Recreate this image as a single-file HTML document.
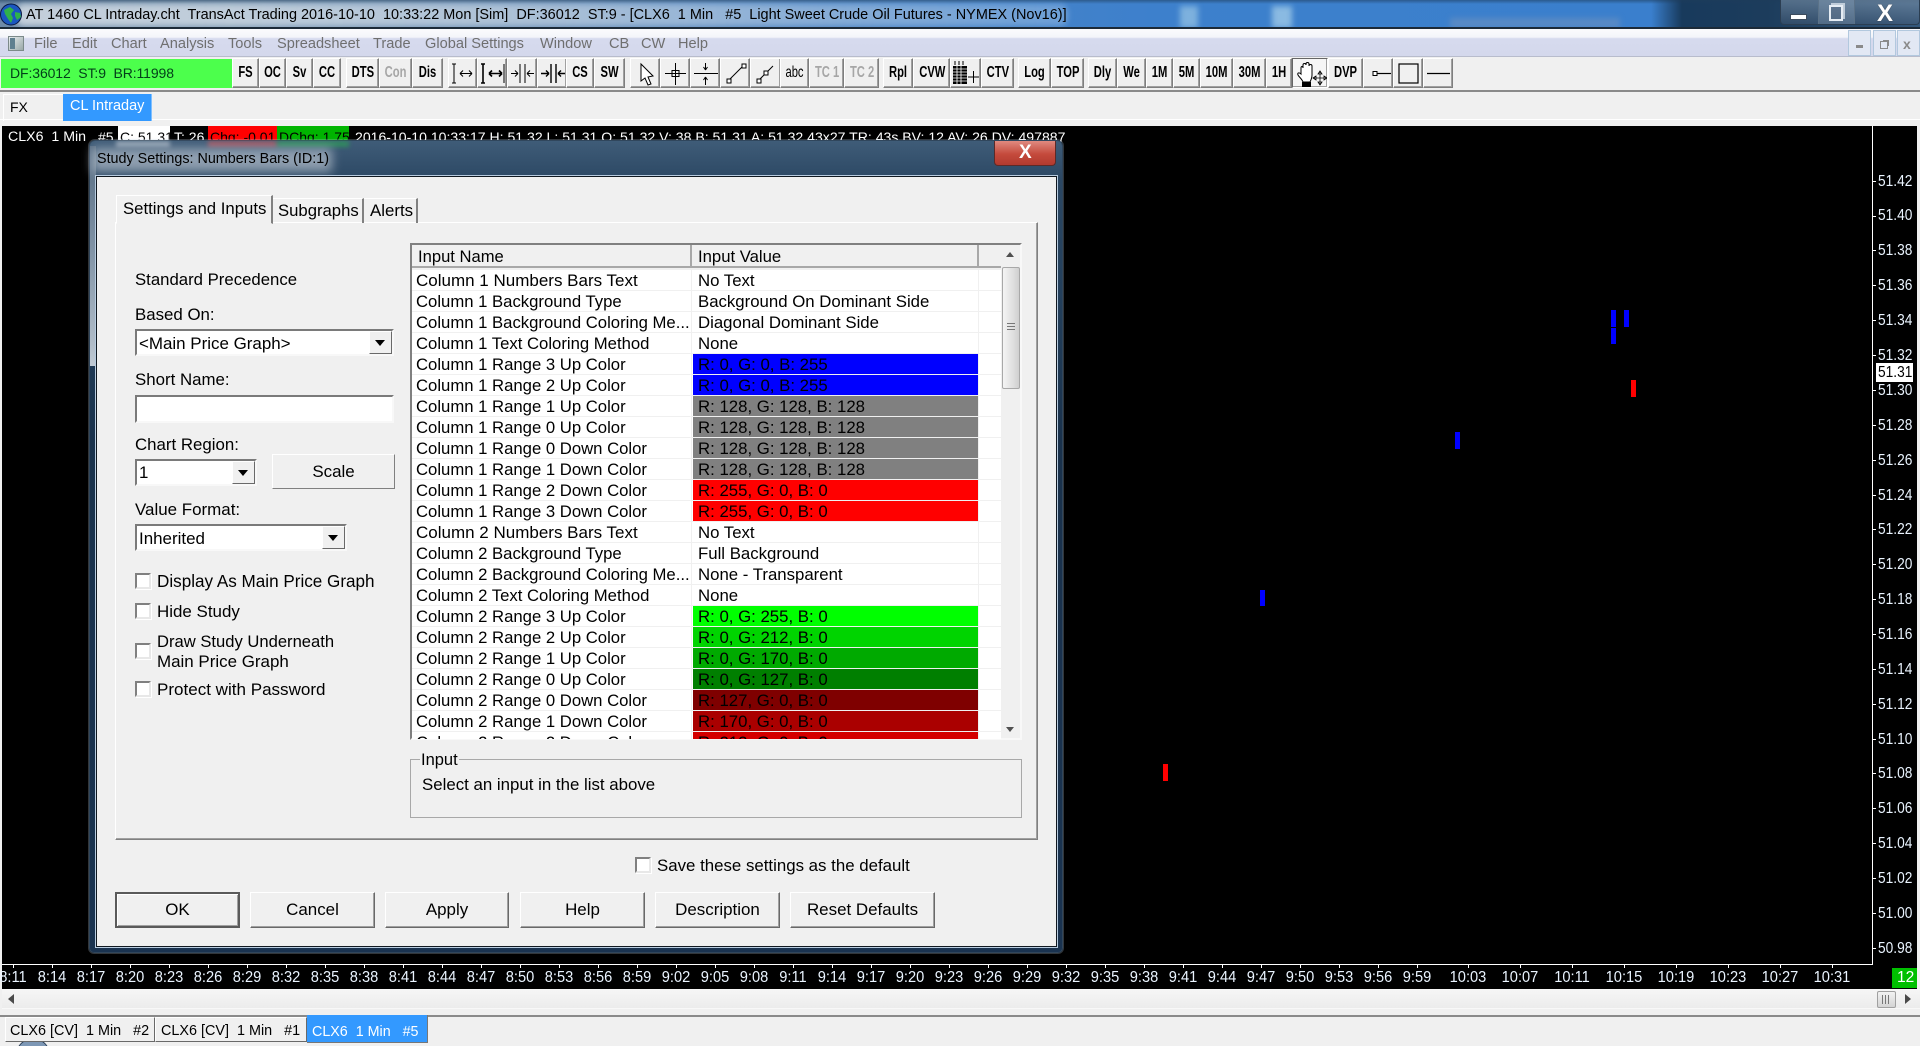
<!DOCTYPE html>
<html><head><meta charset="utf-8"><title>Study Settings</title>
<style>
html,body{margin:0;padding:0;width:1920px;height:1046px;overflow:hidden;background:#f0f0f0;font-family:"Liberation Sans",Arial,sans-serif;color:#000}
#root{position:relative;width:1920px;height:1046px;overflow:hidden;background:#f0f0f0}
div,span{box-sizing:border-box}
.a{position:absolute}
.t{position:absolute;white-space:pre;line-height:20px;font-size:16.85px}
.m{position:absolute;top:34px;white-space:pre;line-height:20px;font-size:14.6px;color:#6f6f6f}
.b{position:absolute;top:58px;height:30px;background:#f0f0f0;border:1px solid;border-color:#fff #7f7f7f #7f7f7f #fff;box-shadow:inset -1px -1px 0 #a0a0a0;text-align:center;font-weight:bold;font-size:16px;line-height:28px;overflow:hidden}
.b i{display:block;font-style:normal;transform:scaleX(.7);white-space:pre}
.b.d{color:#a6a6a6}
.b svg{position:absolute;left:0;top:0}
.p{position:absolute;left:1878px;white-space:pre;font-size:15.6px;line-height:18px;color:#eaf4ff;transform:scaleX(.88);transform-origin:0 0;margin-top:1px}
.tk{position:absolute;left:1873px;width:3px;height:1px;background:#fff}
.x{position:absolute;top:969px;width:60px;margin-left:-30px;text-align:center;font-size:15.6px;line-height:18px;color:#eaf4ff;white-space:pre;transform:scaleX(.94)}
.tx{position:absolute;top:965px;width:1px;height:3px;background:#fff}
.btn{position:absolute;top:892px;height:36px;background:#f0f0f0;border:1px solid;border-color:#fff #696969 #696969 #fff;box-shadow:inset -1px -1px 0 #a0a0a0;text-align:center;font-size:16.95px;line-height:33px}
.cb{position:absolute;width:16px;height:16px;background:#fff;border:2px solid;border-color:#808080 #e8e8e8 #e8e8e8 #808080;box-shadow:1px 1px 0 #fff}
.cbo{position:absolute;background:#fff;border:2px solid;border-color:#7a7a7a #f8f8f8 #f8f8f8 #7a7a7a}
.cbo b{position:absolute;right:0;top:0;bottom:0;width:21px;background:#f0f0f0;border:1px solid;border-color:#fff #696969 #696969 #fff}
.cbo b:after{content:"";position:absolute;left:5px;top:8px;border:5px solid transparent;border-top:6px solid #000;border-bottom:0}
.r{position:relative;height:21px;border-bottom:1px solid #f0f0f0;background:#fff}
.r span{position:absolute;top:0;line-height:22px;font-size:16.7px;white-space:pre}
.r .n{left:4px}
.r .n.w{font-size:17px}
.r .v{left:281px;width:286px;height:20px;padding-left:5px;border-right:1px solid #f0f0f0;font-size:16.8px}
.r:before{content:"";position:absolute;left:279px;top:0;width:1px;height:20px;background:#f0f0f0}
</style></head><body><div id="root">

<!-- title bar -->
<div class="a" style="left:0;top:0;width:1920px;height:28px;background:linear-gradient(90deg,#6d8aa8 0,#7e9ab4 12%,#6f93ba 28%,#4f86c4 42%,#3d80cc 60%,#3a7fcd 86%,#183a5c 87.6%,#1c3c5c 92%,#34587c 100%)"></div>
<div class="a" style="left:0;top:0;width:1920px;height:4px;background:linear-gradient(180deg,rgba(30,60,90,.55),rgba(30,60,90,0))"></div>
<div class="a" style="left:16px;top:4px;width:1052px;height:22px;background:linear-gradient(90deg,rgba(232,236,240,.7),rgba(215,225,235,.6) 45%,rgba(190,215,240,.35));border-radius:8px;filter:blur(3px)"></div>
<div class="a" style="left:1180px;top:6px;width:18px;height:22px;background:rgba(190,225,240,.5);filter:blur(3px)"></div>
<div class="a" style="left:1272px;top:6px;width:20px;height:22px;background:rgba(190,225,240,.6);filter:blur(3px)"></div>
<div class="a" style="left:1450px;top:18px;width:170px;height:10px;background:rgba(120,150,190,.5);filter:blur(3px)"></div>
<svg class="a" style="left:0;top:3px" width="23" height="23" viewBox="0 0 23 23"><circle cx="11" cy="11.5" r="10.5" fill="#1b57c0" stroke="#081840"/><path d="M4 7l6-3 4 3-3 4 2 4-2 5-3-4-3-5zM15 9l5 1 1 4-4 3-2-4z" fill="#2fb24a"/></svg>
<div class="t" style="left:26px;top:5px;font-size:14.46px">AT 1460 CL Intraday.cht  TransAct Trading 2016-10-10  10:33:22 Mon [Sim]  DF:36012  ST:9 - [CLX6  1 Min   #5  Light Sweet Crude Oil Futures - NYMEX (Nov16)]</div>
<!-- window buttons -->
<div class="a" style="left:1780px;top:0;width:140px;height:25px;background:linear-gradient(180deg,rgba(150,170,190,.45),rgba(70,90,115,.45));border:1px solid #2b3e52;border-top:0;border-radius:0 0 4px 4px"></div>
<div class="a" style="left:1818px;top:0;width:37px;height:24px;border-left:1px solid #5b7288;border-right:1px solid #5b7288;background:rgba(170,190,210,.25)"></div>
<div class="a" style="left:1790px;top:14px;width:17px;height:6px;background:#fff;border:1px solid #3c4b5c"></div>
<div class="a" style="left:1829px;top:5px;width:14px;height:16px;border:2px solid #e6edf4;background:rgba(80,100,125,.4);box-shadow:2px -2px 0 -0px rgba(230,237,244,.7)"></div>
<div class="t" style="left:1877px;top:3px;font-size:24px;font-weight:bold;color:#fff;line-height:22px;text-shadow:0 0 1px #333">X</div>
<div class="a" style="left:0;top:27px;width:1920px;height:2px;background:#1c2a38"></div>

<!-- menu -->
<div class="a" style="left:0;top:29px;width:1920px;height:28px;background:linear-gradient(180deg,#fbfbfd 0,#f4f5fa 30%,#d6daee 36%,#d4d8ec 100%);border-bottom:1px solid #b8bccc"></div>
<div class="a" style="left:8px;top:36px;width:16px;height:15px;background:linear-gradient(135deg,#e8eef0,#9aa8a8);border:1px solid #7c8a8a"></div>
<div class="a" style="left:10px;top:38px;width:5px;height:11px;background:#5f7f8f"></div>
<div class="m" style="left:34px">File</div><div class="m" style="left:72px">Edit</div><div class="m" style="left:111px">Chart</div><div class="m" style="left:160px">Analysis</div><div class="m" style="left:228px">Tools</div><div class="m" style="left:277px">Spreadsheet</div><div class="m" style="left:373px">Trade</div><div class="m" style="left:425px">Global Settings</div><div class="m" style="left:540px">Window</div><div class="m" style="left:609px">CB</div><div class="m" style="left:641px">CW</div><div class="m" style="left:678px">Help</div>
<div class="a" style="left:1848px;top:30px;width:23px;height:26px;background:#e2e8f4;border:1px solid #b2c8de"></div>
<div class="a" style="left:1873px;top:30px;width:23px;height:26px;background:#e2e8f4;border:1px solid #b2c8de"></div>
<div class="a" style="left:1897px;top:30px;width:23px;height:26px;background:#e2e8f4;border:1px solid #b2c8de"></div>
<div class="a" style="left:1856px;top:45px;width:7px;height:3px;background:#8a8a8a"></div>
<div class="a" style="left:1880px;top:41px;width:8px;height:8px;border:1px solid #8a8a8a;box-shadow:2px -2px 0 -1px #8a8a8a"></div>
<div class="t" style="left:1903px;top:34px;font-size:14px;font-weight:bold;color:#8a8a8a">x</div>

<!-- toolbar -->
<div class="a" style="left:1px;top:59px;width:232px;height:29px;background:#4cff4c"></div>
<div class="t" style="left:10px;top:63px;font-size:14px;letter-spacing:-.1px;color:#03401a">DF:36012  ST:9  BR:11998</div>
<div class="b" style="left:232px;width:27px"><i>FS</i></div>
<div class="b" style="left:259px;width:27px"><i>OC</i></div>
<div class="b" style="left:286px;width:27px"><i>Sv</i></div>
<div class="b" style="left:313px;width:28px"><i>CC</i></div>
<div class="b" style="left:346px;width:33px"><i>DTS</i></div>
<div class="b d" style="left:379px;width:33px"><i>Con</i></div>
<div class="b" style="left:412px;width:31px"><i>Dis</i></div>
<div class="b" style="left:448px;width:29px"><svg width="29" height="30"><path d="M5 5v19M3 5h4M3 24h4M11 14.5h12M11 14.5l3-3M11 14.5l3 3M23 14.5l-3-3M23 14.5l-3 3" stroke="#000" fill="none"/></svg></div>
<div class="b" style="left:477px;width:30px"><svg width="30" height="30"><path d="M5 5v19M3 5h4M3 24h4M11 14.5h13M11 14.5l3-3M11 14.5l3 3M24 14.5l-3-3M24 14.5l-3 3" stroke="#000" stroke-width="1.6" fill="none"/><path d="M26 5v19" stroke="#000"/></svg></div>
<div class="b" style="left:507px;width:30px"><svg width="30" height="30"><path d="M12 5v19M17 5v19M3 14.5h7M10 14.5l-3-3M10 14.5l-3 3M26 14.5h-7M19 14.5l3-3M19 14.5l3 3" stroke="#000" fill="none"/></svg></div>
<div class="b" style="left:537px;width:30px"><svg width="30" height="30"><path d="M13 5v19M18 5v19M3 14.5h8M11 14.5l-3-3M11 14.5l-3 3M27 14.5h-7M20 14.5l3-3M20 14.5l3 3" stroke="#000" stroke-width="1.4" fill="none"/></svg></div>
<div class="b" style="left:566px;width:28px"><i>CS</i></div>
<div class="b" style="left:594px;width:31px"><i>SW</i></div>
<div class="b" style="left:630px;width:30px"><svg width="30" height="30"><path d="M10 5v17l4-3 3 7 3-1-3-7 5-1z" stroke="#000" fill="#fff"/></svg></div>
<div class="b" style="left:660px;width:30px"><svg width="30" height="30"><path d="M4 14.5h21M14.5 4v22" stroke="#000" fill="none"/><rect x="11" y="11.5" width="7" height="6" fill="none" stroke="#000"/></svg></div>
<div class="b" style="left:690px;width:30px"><svg width="30" height="30"><path d="M3 14.5h24M14.5 4v7M14.5 18v8M14.5 11l-2-3M14.5 11l2-3M14.5 18l-2 3M14.5 18l2 3" stroke="#000" fill="none"/></svg></div>
<div class="b" style="left:720px;width:30px"><svg width="30" height="30"><path d="M8 21L22 7" stroke="#000"/><rect x="6" y="20" width="4" height="4" fill="#fff" stroke="#000"/><rect x="21" y="5" width="4" height="4" fill="#fff" stroke="#000"/></svg></div>
<div class="b" style="left:750px;width:31px"><svg width="31" height="30"><path d="M8 21l5-5M17 12l5-5" stroke="#000"/><rect x="6" y="20" width="4" height="4" fill="#fff" stroke="#000"/><rect x="13" y="12" width="4" height="4" fill="#fff" stroke="#000"/></svg></div>
<div class="b" style="left:780px;width:29px;font-weight:normal"><i>abc</i></div>
<div class="b d" style="left:809px;width:35px"><i>TC 1</i></div>
<div class="b d" style="left:844px;width:35px"><i>TC 2</i></div>
<div class="b" style="left:883px;width:30px"><i>Rpl</i></div>
<div class="b" style="left:913px;width:37px"><i>CVW</i></div>
<div class="b" style="left:950px;width:31px"><svg width="31" height="30"><rect x="2" y="7" width="14" height="18" fill="#000"/><path d="M2 10h14M2 13h14M2 16h14M2 19h14M2 22h14M6 7v18M10 7v18" stroke="#fff" stroke-width=".8"/><path d="M4 2v4M8 2v4M12 2v4" stroke="#000"/><path d="M17 18h11M22.5 12v12" stroke="#000"/></svg></div>
<div class="b" style="left:981px;width:33px"><i>CTV</i></div>
<div class="b" style="left:1018px;width:33px"><i>Log</i></div>
<div class="b" style="left:1051px;width:33px"><i>TOP</i></div>
<div class="b" style="left:1088px;width:29px"><i>Dly</i></div>
<div class="b" style="left:1117px;width:29px"><i>We</i></div>
<div class="b" style="left:1146px;width:27px"><i>1M</i></div>
<div class="b" style="left:1173px;width:27px"><i>5M</i></div>
<div class="b" style="left:1200px;width:33px"><i>10M</i></div>
<div class="b" style="left:1233px;width:33px"><i>30M</i></div>
<div class="b" style="left:1266px;width:26px"><i>1H</i></div>
<div class="b" style="left:1292px;width:36px;background:#f6f6f6;border-color:#666 #fff #fff #666"><svg width="36" height="30"><path d="M8 15V9c0-2 2-2 2 0V6c0-2 3-2 3 0v-1c0-2 3-2 3 0v2c0-2 3-2 3 0v9c0 3-1 5-2 7H10c-1-3-4-5-5-7-1-2 1-3 3-1z" fill="#fff" stroke="#000"/><rect x="9" y="23" width="9" height="5" fill="#000"/><path d="M27 12v14M20 19h14M27 12l-2 3h4zM27 26l-2-3h4zM20 19l3-2v4zM34 19l-3-2v4z" stroke="#000" fill="#fff" stroke-width=".8"/></svg></div>
<div class="b" style="left:1328px;width:35px"><i>DVP</i></div>
<div class="b" style="left:1363px;width:30px"><svg width="30" height="30"><path d="M12 14.5h15" stroke="#000" stroke-width="1.2"/><rect x="9" y="12.5" width="4" height="4" fill="#fff" stroke="#000"/></svg></div>
<div class="b" style="left:1393px;width:30px"><svg width="30" height="30"><rect x="5" y="5" width="19" height="19" fill="none" stroke="#000" stroke-width="1.2"/></svg></div>
<div class="b" style="left:1423px;width:30px"><svg width="30" height="30"><path d="M3 14.5h23" stroke="#000" stroke-width="1.2"/></svg></div>
<div class="a" style="left:0;top:90px;width:1920px;height:2px;background:#8a8a8a"></div>

<!-- tab strip -->
<div class="a" style="left:0;top:119px;width:1920px;height:1px;background:#fff"></div>
<div class="a" style="left:3px;top:94px;width:60px;height:27px;border-left:1px solid #fff;border-top:1px solid #fff"></div>
<div class="t" style="left:10px;top:97px;font-size:14px">FX</div>
<div class="a" style="left:63px;top:94px;width:89px;height:27px;background:#3399ff;border-right:1px solid #7fbfff"></div>
<div class="t" style="left:70px;top:96px;font-size:14.5px;color:#fff">CL Intraday</div>

<!-- chart -->
<div class="a" style="left:2px;top:126px;width:1915px;height:863px;background:#000"></div>
<div class="a" style="left:1872px;top:126px;width:1px;height:839px;background:#fff"></div>
<div class="a" style="left:2px;top:964px;width:1871px;height:1px;background:#fff"></div>
<div class="t" style="left:8px;top:127px;font-size:14.2px;color:#fff">CLX6  1 Min</div>
<div class="a" style="left:118px;top:126px;width:52px;height:18px;background:#fff"></div>
<div class="a" style="left:208px;top:126px;width:69px;height:18px;background:#f00"></div>
<div class="a" style="left:277px;top:126px;width:72px;height:18px;background:#00b400"></div>
<div class="t" style="left:98px;top:127px;font-size:14px;color:#fff">#5</div>
<div class="t" style="left:120px;top:127px;font-size:14px">C: 51.31</div>
<div class="t" style="left:174px;top:127px;font-size:14px;color:#fff">T: 26</div>
<div class="t" style="left:210px;top:127px;font-size:14px">Chg: -0.01</div>
<div class="t" style="left:279px;top:127px;font-size:14px">DChg: 1.75</div>
<div class="t" style="left:355px;top:127px;font-size:14.07px;color:#fff">2016-10-10 10:33:17 H: 51.32 L: 51.31 O: 51.32 V: 38 B: 51.31 A: 51.32 43x27 TR: 43s BV: 12 AV: 26 DV: 497887</div>

<!-- bars -->
<div class="a" style="left:1611px;top:310px;width:5px;height:17px;background:#00f"></div>
<div class="a" style="left:1611px;top:328px;width:5px;height:16px;background:#00f"></div>
<div class="a" style="left:1624px;top:310px;width:5px;height:17px;background:#00f"></div>
<div class="a" style="left:1631px;top:380px;width:5px;height:17px;background:#f00"></div>
<div class="a" style="left:1455px;top:432px;width:5px;height:17px;background:#00f"></div>
<div class="a" style="left:1260px;top:590px;width:5px;height:16px;background:#00f"></div>
<div class="a" style="left:1163px;top:764px;width:5px;height:17px;background:#f00"></div>

<!-- price axis -->
<div class="p" style="top:172px">51.42</div><div class="tk" style="top:181px"></div>
<div class="p" style="top:206px">51.40</div><div class="tk" style="top:216px"></div>
<div class="p" style="top:241px">51.38</div><div class="tk" style="top:250px"></div>
<div class="p" style="top:276px">51.36</div><div class="tk" style="top:285px"></div>
<div class="p" style="top:311px">51.34</div><div class="tk" style="top:320px"></div>
<div class="p" style="top:346px">51.32</div><div class="tk" style="top:355px"></div>
<div class="p" style="top:381px">51.30</div><div class="tk" style="top:390px"></div>
<div class="a" style="left:1876px;top:363px;width:37px;height:19px;background:#fff"></div>
<div class="p" style="top:363px;color:#000">51.31</div>
<div class="p" style="top:416px">51.28</div><div class="tk" style="top:425px"></div>
<div class="p" style="top:451px">51.26</div><div class="tk" style="top:460px"></div>
<div class="p" style="top:486px">51.24</div><div class="tk" style="top:495px"></div>
<div class="p" style="top:520px">51.22</div><div class="tk" style="top:529px"></div>
<div class="p" style="top:555px">51.20</div><div class="tk" style="top:564px"></div>
<div class="p" style="top:590px">51.18</div><div class="tk" style="top:599px"></div>
<div class="p" style="top:625px">51.16</div><div class="tk" style="top:634px"></div>
<div class="p" style="top:660px">51.14</div><div class="tk" style="top:669px"></div>
<div class="p" style="top:695px">51.12</div><div class="tk" style="top:704px"></div>
<div class="p" style="top:730px">51.10</div><div class="tk" style="top:739px"></div>
<div class="p" style="top:764px">51.08</div><div class="tk" style="top:773px"></div>
<div class="p" style="top:799px">51.06</div><div class="tk" style="top:808px"></div>
<div class="p" style="top:834px">51.04</div><div class="tk" style="top:843px"></div>
<div class="p" style="top:869px">51.02</div><div class="tk" style="top:878px"></div>
<div class="p" style="top:904px">51.00</div><div class="tk" style="top:913px"></div>
<div class="p" style="top:939px">50.98</div><div class="tk" style="top:948px"></div>

<!-- time axis -->
<div class="x" style="left:13px">8:11</div><div class="x" style="left:52px">8:14</div><div class="x" style="left:91px">8:17</div><div class="x" style="left:130px">8:20</div><div class="x" style="left:169px">8:23</div><div class="x" style="left:208px">8:26</div><div class="x" style="left:247px">8:29</div><div class="x" style="left:286px">8:32</div><div class="x" style="left:325px">8:35</div><div class="x" style="left:364px">8:38</div><div class="x" style="left:403px">8:41</div><div class="x" style="left:442px">8:44</div><div class="x" style="left:481px">8:47</div><div class="x" style="left:520px">8:50</div><div class="x" style="left:559px">8:53</div><div class="x" style="left:598px">8:56</div><div class="x" style="left:637px">8:59</div><div class="x" style="left:676px">9:02</div><div class="x" style="left:715px">9:05</div><div class="x" style="left:754px">9:08</div><div class="x" style="left:793px">9:11</div><div class="x" style="left:832px">9:14</div><div class="x" style="left:871px">9:17</div><div class="x" style="left:910px">9:20</div><div class="x" style="left:949px">9:23</div><div class="x" style="left:988px">9:26</div><div class="x" style="left:1027px">9:29</div><div class="x" style="left:1066px">9:32</div><div class="x" style="left:1105px">9:35</div><div class="x" style="left:1144px">9:38</div><div class="x" style="left:1183px">9:41</div><div class="x" style="left:1222px">9:44</div><div class="x" style="left:1261px">9:47</div><div class="x" style="left:1300px">9:50</div><div class="x" style="left:1339px">9:53</div><div class="x" style="left:1378px">9:56</div><div class="x" style="left:1417px">9:59</div><div class="x" style="left:1468px">10:03</div><div class="x" style="left:1520px">10:07</div><div class="x" style="left:1572px">10:11</div><div class="x" style="left:1624px">10:15</div><div class="x" style="left:1676px">10:19</div><div class="x" style="left:1728px">10:23</div><div class="x" style="left:1780px">10:27</div><div class="x" style="left:1832px">10:31</div>
<div class="tx" style="left:13px"></div><div class="tx" style="left:52px"></div><div class="tx" style="left:91px"></div><div class="tx" style="left:130px"></div><div class="tx" style="left:169px"></div><div class="tx" style="left:208px"></div><div class="tx" style="left:247px"></div><div class="tx" style="left:286px"></div><div class="tx" style="left:325px"></div><div class="tx" style="left:364px"></div><div class="tx" style="left:403px"></div><div class="tx" style="left:442px"></div><div class="tx" style="left:481px"></div><div class="tx" style="left:520px"></div><div class="tx" style="left:559px"></div><div class="tx" style="left:598px"></div><div class="tx" style="left:637px"></div><div class="tx" style="left:676px"></div><div class="tx" style="left:715px"></div><div class="tx" style="left:754px"></div><div class="tx" style="left:793px"></div><div class="tx" style="left:832px"></div><div class="tx" style="left:871px"></div><div class="tx" style="left:910px"></div><div class="tx" style="left:949px"></div><div class="tx" style="left:988px"></div><div class="tx" style="left:1027px"></div><div class="tx" style="left:1066px"></div><div class="tx" style="left:1105px"></div><div class="tx" style="left:1144px"></div><div class="tx" style="left:1183px"></div><div class="tx" style="left:1222px"></div><div class="tx" style="left:1261px"></div><div class="tx" style="left:1300px"></div><div class="tx" style="left:1339px"></div><div class="tx" style="left:1378px"></div><div class="tx" style="left:1417px"></div><div class="tx" style="left:1468px"></div><div class="tx" style="left:1520px"></div><div class="tx" style="left:1572px"></div><div class="tx" style="left:1624px"></div><div class="tx" style="left:1676px"></div><div class="tx" style="left:1728px"></div><div class="tx" style="left:1780px"></div><div class="tx" style="left:1832px"></div>
<div class="a" style="left:1892px;top:968px;width:25px;height:20px;background:#00c000"></div>
<div class="t" style="left:1897px;top:968px;font-size:15.6px;color:#fff">12</div>

<!-- hscroll -->
<div class="a" style="left:2px;top:989px;width:1918px;height:20px;background:linear-gradient(180deg,#f6f6f6,#ececec);border-bottom:1px solid #f8f8f8"></div>
<div class="a" style="left:8px;top:994px;border:5px solid transparent;border-right:6px solid #4a4a4a;border-left:0"></div>
<div class="a" style="left:1877px;top:991px;width:19px;height:17px;background:linear-gradient(180deg,#f2f2f2,#d4d4d4);border:1px solid #a0a0a0;border-radius:2px"></div>
<div class="a" style="left:1882px;top:995px;width:9px;height:9px;background:repeating-linear-gradient(90deg,#777 0 1px,transparent 1px 3px)"></div>
<div class="a" style="left:1905px;top:994px;border:5px solid transparent;border-left:6px solid #4a4a4a;border-right:0"></div>
<div class="a" style="left:0;top:1015px;width:1920px;height:2px;background:#8a8a8a"></div>

<!-- bottom tabs -->
<div class="a" style="left:16px;top:1038px;width:34px;height:34px;border-radius:50%;background:#7d97b5;border:1px solid #2c4058"></div>
<div class="a" style="left:5px;top:1017px;width:150px;height:25px;background:#f0f0f0;border:1px solid;border-color:#fff #696969 #696969 #fff"></div>
<div class="a" style="left:155px;top:1017px;width:152px;height:25px;background:#f0f0f0;border:1px solid;border-color:#fff #696969 #696969 #fff"></div>
<div class="a" style="left:307px;top:1015px;width:121px;height:28px;background:#3399ff;border-bottom:1px solid #777;border-right:1px solid #777"></div>
<div class="t" style="left:10px;top:1021px;font-size:14.4px">CLX6 [CV]  1 Min   #2</div>
<div class="t" style="left:161px;top:1021px;font-size:14.4px">CLX6 [CV]  1 Min   #1</div>
<div class="t" style="left:312px;top:1022px;font-size:14.3px;color:#fff">CLX6  1 Min   #5</div>

<!-- dialog frame -->
<div class="a" style="left:89px;top:140px;width:974px;height:813px;border-radius:6px 6px 5px 5px;background:linear-gradient(180deg,#3f5c78 0,#2b4763 40px,#24405c 150px,#1a324c 300px,#1a3350 100%);border:1px solid #30465c;box-shadow:0 0 0 1px rgba(200,215,230,.25)"></div>
<div class="a" style="left:90px;top:146px;width:6px;height:220px;background:linear-gradient(180deg,#566c82,#8496a8 50%,#b0bcc8 90%,#c0cad4)"></div>
<div class="a" style="left:116px;top:141px;width:54px;height:6px;background:rgba(225,230,235,.5);filter:blur(2px)"></div>
<div class="a" style="left:208px;top:141px;width:69px;height:6px;background:rgba(230,80,80,.55);filter:blur(2px)"></div>
<div class="a" style="left:277px;top:141px;width:72px;height:6px;background:rgba(40,170,80,.6);filter:blur(2px)"></div>
<div class="a" style="left:92px;top:148px;width:240px;height:24px;background:rgba(190,200,210,.65);filter:blur(5px)"></div>
<div class="t" style="left:97px;top:149px;font-size:14.35px">Study Settings: Numbers Bars (ID:1)</div>
<div class="a" style="left:994px;top:141px;width:62px;height:25px;background:linear-gradient(180deg,#e08a80,#c44a3c 55%,#b23a2f);border:1px solid #5c2a28;border-top:0;border-radius:0 0 4px 4px"></div>
<div class="t" style="left:1019px;top:143px;font-size:19px;font-weight:bold;color:#fff">X</div>
<div class="a" style="left:96px;top:176px;width:961px;height:771px;background:#f0f0f0;border:1px solid #101820;outline:1px solid #b8cce0"></div>

<!-- tab panel -->
<div class="a" style="left:115px;top:222px;width:923px;height:618px;border:1px solid;border-color:#fff #808080 #808080 #fff;box-shadow:inset -1px -1px 0 #a0a0a0"></div>
<div class="a" style="left:116px;top:195px;width:157px;height:29px;background:#f0f0f0;border:1px solid;border-color:#fff #808080 #f0f0f0 #fff;border-right-width:2px"></div>
<div class="a" style="left:273px;top:198px;width:91px;height:25px;border-right:2px solid #808080;border-top:1px solid #fff"></div>
<div class="a" style="left:364px;top:198px;width:54px;height:25px;border-right:2px solid #808080;border-top:1px solid #fff"></div>
<div class="t" style="left:123px;top:199px;font-size:16.75px">Settings and Inputs</div>
<div class="t" style="left:278px;top:201px;font-size:16.7px">Subgraphs</div>
<div class="t" style="left:370px;top:201px">Alerts</div>

<!-- left settings -->
<div class="t" style="left:135px;top:270px;font-size:16.75px">Standard Precedence</div>
<div class="t" style="left:135px;top:305px">Based On:</div>
<div class="cbo" style="left:135px;top:329px;width:259px;height:27px"><b></b></div>
<div class="t" style="left:139px;top:334px;font-size:16.95px">&lt;Main Price Graph&gt;</div>
<div class="t" style="left:135px;top:370px">Short Name:</div>
<div class="cbo" style="left:135px;top:395px;width:259px;height:28px"></div>
<div class="t" style="left:135px;top:435px">Chart Region:</div>
<div class="cbo" style="left:135px;top:459px;width:122px;height:27px"><b></b></div>
<div class="t" style="left:139px;top:463px">1</div>
<div class="btn" style="left:272px;top:454px;width:123px;height:35px;line-height:33px;border-color:#fff #808080 #808080 #fff;box-shadow:none">Scale</div>
<div class="t" style="left:135px;top:500px;font-size:16.95px">Value Format:</div>
<div class="cbo" style="left:135px;top:524px;width:212px;height:27px"><b></b></div>
<div class="t" style="left:139px;top:529px;font-size:16.95px">Inherited</div>
<div class="cb" style="left:135px;top:573px"></div><div class="t" style="left:157px;top:572px;font-size:17.1px">Display As Main Price Graph</div>
<div class="cb" style="left:135px;top:603px"></div><div class="t" style="left:157px;top:602px;font-size:16.95px">Hide Study</div>
<div class="cb" style="left:135px;top:643px"></div><div class="t" style="left:157px;top:632px;font-size:16.6px">Draw Study Underneath</div><div class="t" style="left:157px;top:652px;font-size:16.95px">Main Price Graph</div>
<div class="cb" style="left:135px;top:681px"></div><div class="t" style="left:157px;top:680px;font-size:17.05px">Protect with Password</div>

<!-- list -->
<div class="a" style="left:410px;top:243px;width:612px;height:497px;background:#f0f0f0;border:2px solid;border-color:#808080 #f8f8f8 #f8f8f8 #808080"></div>
<div class="a" style="left:412px;top:245px;width:589px;height:23px;background:#f0f0f0;border-bottom:2px solid #a8a8a8"></div>
<div class="a" style="left:690px;top:245px;width:2px;height:22px;background:#a8a8a8"></div>
<div class="a" style="left:977px;top:245px;width:2px;height:22px;background:#a8a8a8"></div>
<div class="t" style="left:418px;top:247px;font-size:16.6px">Input Name</div>
<div class="t" style="left:698px;top:247px;font-size:16.7px">Input Value</div>
<div class="a" style="left:412px;top:270px;width:589px;height:469px;overflow:hidden;background:#fff">
<div class="r"><span class="n w">Column 1 Numbers Bars Text</span><span class="v">No Text</span></div>
<div class="r"><span class="n">Column 1 Background Type</span><span class="v">Background On Dominant Side</span></div>
<div class="r"><span class="n">Column 1 Background Coloring Me...</span><span class="v">Diagonal Dominant Side</span></div>
<div class="r"><span class="n">Column 1 Text Coloring Method</span><span class="v">None</span></div>
<div class="r"><span class="n">Column 1 Range 3 Up Color</span><span class="v" style="background:#00f">R: 0, G: 0, B: 255</span></div>
<div class="r"><span class="n">Column 1 Range 2 Up Color</span><span class="v" style="background:#00f">R: 0, G: 0, B: 255</span></div>
<div class="r"><span class="n">Column 1 Range 1 Up Color</span><span class="v" style="background:#808080">R: 128, G: 128, B: 128</span></div>
<div class="r"><span class="n">Column 1 Range 0 Up Color</span><span class="v" style="background:#808080">R: 128, G: 128, B: 128</span></div>
<div class="r"><span class="n">Column 1 Range 0 Down Color</span><span class="v" style="background:#808080">R: 128, G: 128, B: 128</span></div>
<div class="r"><span class="n">Column 1 Range 1 Down Color</span><span class="v" style="background:#808080">R: 128, G: 128, B: 128</span></div>
<div class="r"><span class="n">Column 1 Range 2 Down Color</span><span class="v" style="background:#f00">R: 255, G: 0, B: 0</span></div>
<div class="r"><span class="n">Column 1 Range 3 Down Color</span><span class="v" style="background:#f00">R: 255, G: 0, B: 0</span></div>
<div class="r"><span class="n w">Column 2 Numbers Bars Text</span><span class="v">No Text</span></div>
<div class="r"><span class="n">Column 2 Background Type</span><span class="v">Full Background</span></div>
<div class="r"><span class="n">Column 2 Background Coloring Me...</span><span class="v">None - Transparent</span></div>
<div class="r"><span class="n">Column 2 Text Coloring Method</span><span class="v">None</span></div>
<div class="r"><span class="n">Column 2 Range 3 Up Color</span><span class="v" style="background:#0f0">R: 0, G: 255, B: 0</span></div>
<div class="r"><span class="n">Column 2 Range 2 Up Color</span><span class="v" style="background:#00d400">R: 0, G: 212, B: 0</span></div>
<div class="r"><span class="n">Column 2 Range 1 Up Color</span><span class="v" style="background:#00aa00">R: 0, G: 170, B: 0</span></div>
<div class="r"><span class="n">Column 2 Range 0 Up Color</span><span class="v" style="background:#007f00">R: 0, G: 127, B: 0</span></div>
<div class="r"><span class="n">Column 2 Range 0 Down Color</span><span class="v" style="background:#7f0000">R: 127, G: 0, B: 0</span></div>
<div class="r"><span class="n">Column 2 Range 1 Down Color</span><span class="v" style="background:#aa0000">R: 170, G: 0, B: 0</span></div>
<div class="r"><span class="n">Column 2 Range 2 Down Color</span><span class="v" style="background:#d40000">R: 212, G: 0, B: 0</span></div>
</div>
<!-- list scrollbar -->
<div class="a" style="left:1001px;top:245px;width:19px;height:493px;background:#f0f0f0"></div>
<div class="a" style="left:1006px;top:252px;border:4px solid transparent;border-bottom:5px solid #505050;border-top:0"></div>
<div class="a" style="left:1002px;top:267px;width:18px;height:122px;background:linear-gradient(90deg,#f4f4f4,#e0e0e0 60%,#cfcfcf);border:1px solid #a8a8a8;border-radius:2px"></div>
<div class="a" style="left:1007px;top:323px;width:8px;height:8px;background:repeating-linear-gradient(180deg,#777 0 1px,transparent 1px 3px)"></div>
<div class="a" style="left:1006px;top:727px;border:4px solid transparent;border-top:5px solid #505050;border-bottom:0"></div>

<!-- input group -->
<div class="a" style="left:410px;top:759px;width:612px;height:59px;border:1px solid #a8a8a8"></div>
<div class="t" style="left:420px;top:750px;background:#f0f0f0;padding:0 1px;font-size:16.5px">Input</div>
<div class="t" style="left:422px;top:775px">Select an input in the list above</div>

<!-- bottom -->
<div class="cb" style="left:635px;top:857px"></div>
<div class="t" style="left:657px;top:856px">Save these settings as the default</div>
<div class="btn" style="left:115px;width:125px;border:2px solid;border-color:#5a5a5a;box-shadow:inset 1px 1px 0 #fff,inset -1px -1px 0 #a0a0a0;line-height:32px">OK</div>
<div class="btn" style="left:250px;width:125px">Cancel</div>
<div class="btn" style="left:385px;width:124px">Apply</div>
<div class="btn" style="left:520px;width:125px">Help</div>
<div class="btn" style="left:655px;width:125px">Description</div>
<div class="btn" style="left:790px;width:145px">Reset Defaults</div>
</div></body></html>
